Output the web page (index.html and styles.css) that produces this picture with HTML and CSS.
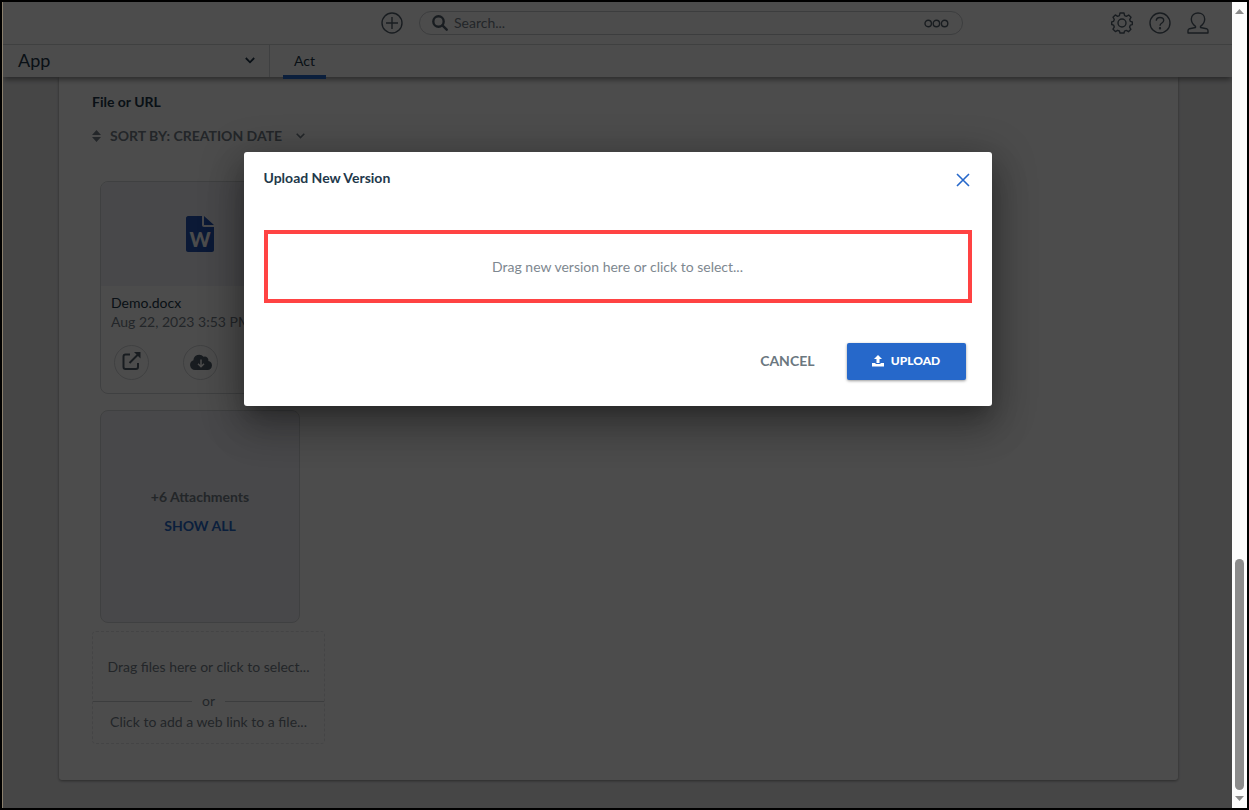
FILE: index.html
```
<!DOCTYPE html>
<html lang="en">
<head>
    <meta charset="utf-8">
    <title>Upload New Version</title>
    <link rel="stylesheet" href="styles.css">
</head>
<body>
    <div class="window">
        <div class="app">
            <header class="topbar">
                <div class="search-area">
                    <button class="icon-button" aria-label="Add">
                        <svg width="22" height="22" viewBox="0 0 22 22" fill="none" stroke="currentColor" stroke-width="1.4">
                            <circle cx="11" cy="11" r="10"/>
                            <path d="M11 5v12M5 11h12"/>
                        </svg>
                    </button>
                    <div class="search-box">
                        <svg width="16" height="16" viewBox="0 0 16 16" fill="none" stroke="currentColor" stroke-width="2.4">
                            <circle cx="6.5" cy="6.5" r="5.2"/>
                            <path d="M10.4 10.4l4.3 4.3" stroke-linecap="round"/>
                        </svg>
                        <input type="text" aria-label="Search" placeholder="Search...">
                        <button class="icon-button" aria-label="Search options">
                            <svg width="25" height="9" viewBox="0 0 25 9" fill="none" stroke="currentColor" stroke-width="1.4">
                                <circle cx="4.2" cy="4.5" r="3.2"/>
                                <circle cx="12.4" cy="4.5" r="3.2"/>
                                <circle cx="20.6" cy="4.5" r="3.2"/>
                            </svg>
                        </button>
                    </div>
                </div>
                <div class="tools">
                    <button class="icon-button" aria-label="Settings">
                        <svg width="22" height="22" viewBox="0 0 22 22" fill="none" stroke="currentColor" stroke-width="1.4" stroke-linejoin="round">
                            <path d="M9 1h4l.6 2.600 1.800.8 2.300-1.400 2.300 2.300-1.300 2.300.7 1.800 1.900.6v2.600l-2 .6-.7 1.900 1.300 2.200-2.400 2.400-2.200-1.300-1.800.7L13 21H9l-.6-2-1.800-.7-2.200 1.300L2 17.200 3.300 15l-.7-1.900-1.900-.6V9.900l1.900-.6.7-1.800L2 5.200l2.300-2.300 2.300 1.400 1.800-.7z"/>
                            <circle cx="11" cy="11" r="4"/>
                        </svg>
                    </button>
                    <button class="icon-button" aria-label="Help">
                        <svg width="22" height="22" viewBox="0 0 22 22" fill="none" stroke="currentColor" stroke-width="1.4">
                            <circle cx="11" cy="11" r="10"/>
                            <path d="M7.3 8.800c0-4.400 7.400-4.200 7.400-.2 0 2.500-3.700 2.400-3.700 5.200"/>
                            <circle cx="11" cy="16.2" r=".5"/>
                        </svg>
                    </button>
                    <button class="icon-button" aria-label="Profile">
                        <svg width="22" height="22" viewBox="0 0 22 22" fill="none" stroke="currentColor" stroke-width="1.4" stroke-linejoin="round">
                            <path d="M8.500 14.300C5.600 12.400 4.300 9.500 4.300 7c0-8 13.400-8 13.400 0 0 2.500-1.300 5.400-4.200 7.300v1.200l6 1.200c1 .3 1.500 1 1.500 2V21H1v-2.300c0-1 .5-1.700 1.500-2l6-1.200z"/>
                        </svg>
                    </button>
                </div>
            </header>

            <nav class="navbar">
                <button class="app-select">
                    <span>App</span>
                    <svg width="10" height="7" viewBox="0 0 10 7" fill="none" stroke="currentColor" stroke-width="1.8">
                        <path d="M.8 1L5 5.300 9.200 1"/>
                    </svg>
                </button>
                <a class="tab" href="#">Act</a>
            </nav>

            <main class="content">
                <section class="panel">
                    <h2>File or URL</h2>
                    <button class="sort-button">
                        <svg width="9" height="12" viewBox="0 0 9 12" fill="currentColor">
                            <path d="M4.500 0L9 5H0zM0 7h9l-4.500 5z"/>
                        </svg>
                        <span>SORT BY: CREATION DATE</span>
                        <svg width="9" height="6" viewBox="0 0 9 6" fill="none" stroke="currentColor" stroke-width="1.6">
                            <path d="M.7.7l3.800 3.800L8.300.7"/>
                        </svg>
                    </button>

                    <div class="cards">
                        <article class="card">
                            <div class="preview">
                                <svg width="28" height="36" viewBox="0 0 28 36">
                                    <path fill="currentColor" d="M2 0h14v9c0 1.200.8 2 2 2h10v23c0 1-.8 2-2 2H2c-1 0-2-1-2-2V2C0 1 1 0 2 0zM18 0l10 9H18z"/>
                                    <text class="file-letter" x="14" y="31" text-anchor="middle">W</text>
                                </svg>
                            </div>
                            <div class="card-body">
                                <div class="file-name">Demo.docx</div>
                                <div class="file-date">Aug 22, 2023 3:53 PM</div>
                                <div class="card-actions">
                                    <button class="round-button" aria-label="Open">
                                        <svg width="19" height="21" viewBox="0 0 19 21" fill="none" stroke="currentColor" stroke-width="2">
                                            <path d="M8 2.500H3.500q-2 0-2 2V15q0 2 2 2H14q2 0 2-2v-4M7.500 11L16 2.500"/>
                                            <path d="M12 0h6.500v6.500z" fill="currentColor" stroke="none"/>
                                        </svg>
                                    </button>
                                    <button class="round-button" aria-label="Download">
                                        <svg width="22" height="18" viewBox="0 0 22 18">
                                            <path fill="currentColor" d="M5 16a5 5 0 0 1-1.600-9.700A5.800 5.800 0 0 1 13.600 2.800a3.500 3.500 0 0 1 4.700 4.100A4.600 4.600 0 0 1 17.500 16z"/>
                                            <path fill="none" stroke="#fff" stroke-width="1.5" d="M11 5.500v7M8 9.700l3 3 3-3"/>
                                        </svg>
                                    </button>
                                </div>
                            </div>
                        </article>

                        <article class="card more">
                            <div class="more-count">+6 Attachments</div>
                            <a href="#">SHOW ALL</a>
                        </article>
                    </div>

                    <div class="add-file">
                        <button class="add-drop">Drag files here or click to select...</button>
                        <div class="divider">or</div>
                        <button class="add-link">Click to add a web link to a file...</button>
                    </div>
                </section>
            </main>

            <div class="overlay">
                <div class="modal" role="dialog" aria-labelledby="modalTitle">
                    <div class="modal-header">
                        <h1 id="modalTitle">Upload New Version</h1>
                        <button class="close-button" aria-label="Close">
                            <svg width="14" height="14" viewBox="0 0 14 14" fill="none" stroke="currentColor" stroke-width="1.6">
                                <path d="M1 1l12 12M13 1L1 13"/>
                            </svg>
                        </button>
                    </div>
                    <button class="drop-zone">Drag new version here or click to select...</button>
                    <div class="modal-footer">
                        <button class="cancel-button">CANCEL</button>
                        <button class="upload-button">
                            <svg width="12" height="12" viewBox="0 0 12 12" fill="currentColor">
                                <path d="M6 0l4 4H7.500v4h-3V4H2z"/>
                                <path d="M0 8h3.500v1h5V8H12v3.400H0z"/>
                            </svg>
                            <span>UPLOAD</span>
                        </button>
                    </div>
                </div>
            </div>
        </div>

        <div class="scrollbar">
            <svg width="9" height="5" viewBox="0 0 9 5" fill="currentColor"><path d="M4.500 0L9 5H0z"/></svg>
            <div class="scroll-track">
                <div class="scroll-thumb"></div>
            </div>
            <svg width="9" height="5" viewBox="0 0 9 5" fill="currentColor"><path d="M0 0h9L4.500 5z"/></svg>
        </div>
    </div>
</body>
</html>
```

FILE: styles.css
```
:root {
    --blue: #2668ca;
    --dark: #22384a;
    --icon: #53606c;
    --muted: #75808a;
    --line: #d4d6d9;
    --page: #ebebec;
}
* {
    box-sizing: border-box;
}
body {
    margin: 0;
    font-family: Lato, "Open Sans", sans-serif;
    font-size: 14px;
    line-height: 20px;
    color: var(--dark);
}
button {
    padding: 0;
    border: none;
    background: none;
    color: inherit;
    font: inherit;
    cursor: pointer;
}
svg {
    display: block;
    flex: none;
}
a {
    color: var(--blue);
    text-decoration: none;
}
h1, h2 {
    margin: 0;
    font-size: 14px;
    line-height: 20px;
    font-weight: bold;
}
.window {
    display: flex;
    min-height: 100vh;
    border: 2px solid #000;
}
.app {
    flex: 1;
    position: relative;
    display: flex;
    flex-direction: column;
    overflow: hidden;
    border-left: 1px solid #8a7f6c;
    background: var(--page);
}

/* top bar */
.topbar {
    display: flex;
    justify-content: space-between;
    align-items: center;
    height: 43px;
    padding: 0 23px 0 378px;
    border-bottom: 1px solid var(--line);
    background: #fff;
    color: var(--icon);
}
.search-area {
    flex: 1;
    display: flex;
    align-items: center;
    gap: 16px;
    max-width: 582px;
}
.search-box {
    flex: 1;
    display: flex;
    align-items: center;
    gap: 6px;
    height: 24px;
    padding: 0 13px 0 12px;
    border: 1px solid #c9ccd0;
    border-radius: 12px;
}
.search-box input {
    flex: 1;
    min-width: 0;
    padding: 0;
    border: none;
    outline: none;
    background: none;
    font: inherit;
}
.search-box input::placeholder {
    color: var(--muted);
}
.tools {
    display: flex;
    gap: 16px;
}

/* nav */
.navbar {
    position: relative;
    z-index: 1;
    display: flex;
    height: 32px;
    background: #fff;
    box-shadow: 0 4px 5px -1px rgba(0, 0, 0, 0.4);
}
.app-select {
    display: flex;
    justify-content: space-between;
    align-items: center;
    width: 267px;
    padding: 0 14px 2px 15px;
    border-right: 1px solid var(--line);
    font-size: 18px;
}
.tab {
    margin: 0 0 -2px 13px;
    padding: 6px 11px 0;
    border-bottom: 4px solid var(--blue);
    color: var(--dark);
}

/* content */
.content {
    flex: 1;
    padding: 0 54px 28px 56px;
}
.panel {
    padding: 15px 33px 36px;
    border-radius: 0 0 3px 3px;
    background: #fff;
    box-shadow: 0 1px 3px rgba(0, 0, 0, 0.4);
}
.sort-button {
    display: flex;
    align-items: center;
    gap: 9px;
    margin-top: 14px;
    color: var(--muted);
    font-weight: bold;
}
.sort-button svg:last-child {
    margin-left: 5px;
}
.cards {
    display: flex;
    flex-direction: column;
    gap: 16px;
    margin: 35px 8px 8px;
}
.card {
    width: 200px;
    height: 213px;
    border: 1px solid var(--line);
    border-radius: 8px;
    overflow: hidden;
}
.preview {
    display: flex;
    justify-content: center;
    align-items: center;
    height: 104px;
    background: #f1f2f7;
    color: #2556b4;
}
.file-letter {
    font-size: 20px;
    font-weight: 900;
    fill: #fff;
}
.card-body {
    padding: 7px 10px;
    line-height: 19px;
}
.file-date {
    color: var(--muted);
    white-space: nowrap;
}
.card-actions {
    display: flex;
    gap: 34px;
    margin: 14px 3px 0;
}
.round-button {
    display: flex;
    justify-content: center;
    align-items: center;
    width: 35px;
    height: 35px;
    border: 1px solid var(--line);
    border-radius: 50%;
    color: var(--icon);
}
.more {
    display: flex;
    flex-direction: column;
    justify-content: center;
    align-items: center;
    gap: 9px;
    padding-bottom: 10px;
    background: #f1f2f7;
    font-weight: bold;
}
.more-count {
    color: var(--muted);
}
.add-file {
    display: flex;
    flex-direction: column;
    width: 233px;
    border: 1px dashed #e4e5e8;
    border-radius: 4px;
    color: var(--muted);
}
.add-drop {
    padding: 25px 0 14px;
}
.divider {
    display: flex;
    align-items: center;
    gap: 10px;
}
.divider::before,
.divider::after {
    content: "";
    flex: 1;
    height: 1px;
    background: #c9ccd0;
}
.add-link {
    padding: 1px 0 11px;
}

/* modal */
.overlay {
    position: absolute;
    inset: 0;
    z-index: 2;
    display: flex;
    justify-content: center;
    align-items: flex-start;
    padding: 150px 20px 20px;
    background: rgba(0, 0, 0, 0.7);
}
.modal {
    width: 748px;
    padding: 16px 20px 26px;
    border-radius: 3px;
    background: #fff;
    box-shadow: 0 11px 15px -7px rgba(0, 0, 0, 0.2), 0 24px 38px 3px rgba(0, 0, 0, 0.14), 0 9px 40px 4px rgba(0, 0, 0, 0.3);
}
.modal-header {
    display: flex;
    justify-content: space-between;
    align-items: center;
}
.close-button {
    padding: 5px 2px 1px;
    color: var(--blue);
}
.drop-zone {
    width: 100%;
    height: 73px;
    margin-top: 42px;
    border: 4px solid #ff4343;
    color: #7e8890;
}
.modal-footer {
    display: flex;
    justify-content: flex-end;
    align-items: center;
    gap: 32px;
    margin-top: 40px;
    padding-right: 6px;
}
.cancel-button {
    padding-bottom: 2px;
    color: #6b7780;
    font-weight: bold;
}
.upload-button {
    display: flex;
    justify-content: center;
    align-items: center;
    gap: 7px;
    width: 119px;
    height: 37px;
    padding-bottom: 1px;
    border-radius: 2px;
    background: var(--blue);
    box-shadow: 0 1px 3px rgba(0, 0, 0, 0.4);
    color: #fff;
    font-size: 12px;
    font-weight: 900;
}

/* scrollbar */
.scrollbar {
    display: flex;
    flex-direction: column;
    align-items: center;
    width: 15px;
    padding: 7px 0;
    background: #fcfcfc;
    color: #8b8b8b;
}
.scroll-track {
    flex: 1;
    display: flex;
    align-items: flex-end;
    padding: 6px 0;
}
.scroll-thumb {
    width: 9px;
    height: 30%;
    border-radius: 5px;
    background: #8b8b8b;
}
```
